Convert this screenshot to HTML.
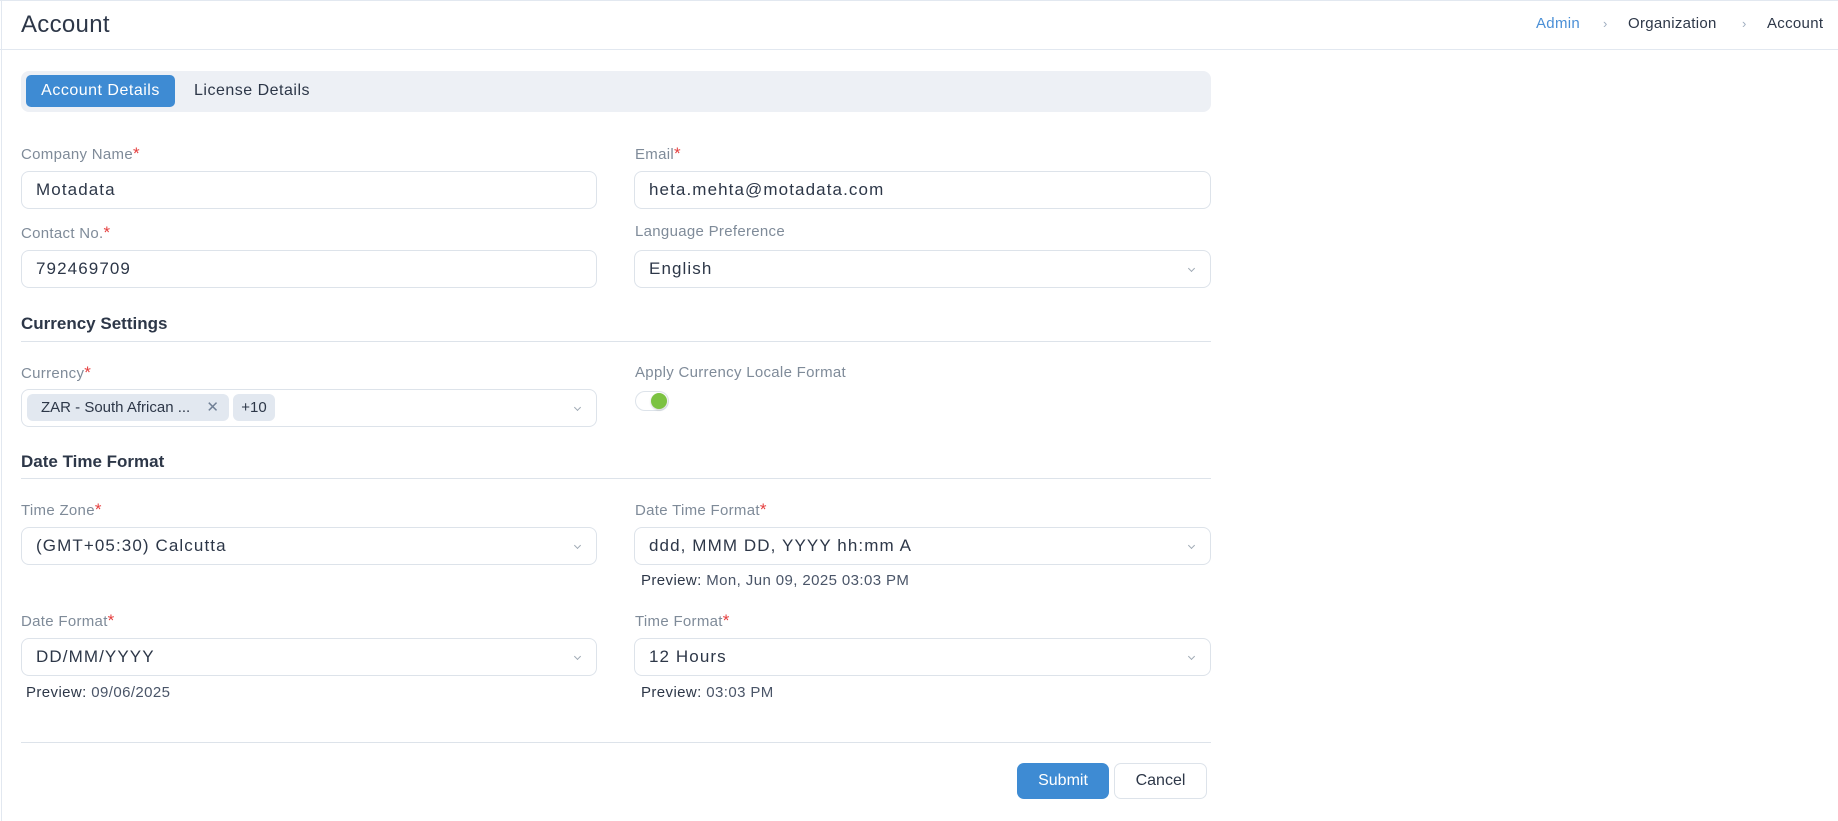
<!DOCTYPE html>
<html><head><meta charset="utf-8"><style>
*{box-sizing:border-box;margin:0;padding:0}
body{width:1838px;height:821px;background:#fff;font-family:"Liberation Sans",sans-serif;color:#2d3748;position:relative;overflow:hidden}
.a{position:absolute;white-space:nowrap}
.lbl{font-size:15px;color:#7f8b99;letter-spacing:0.3px}
.lbl i{color:#e53e3e;font-style:normal;font-size:17px}
.inp{position:absolute;height:38px;border:1px solid #dde3ea;border-radius:8px;font-size:17px;letter-spacing:1.1px;color:#2d3748;padding-left:14px;line-height:36px}
.L{left:21px;width:576px}.R{left:634px;width:577px}
.chev{position:absolute;right:16px;top:15px;width:5px;height:5px;border-right:1px solid #a0aab5;border-bottom:1px solid #a0aab5;transform:rotate(45deg)}
.h{font-size:17px;font-weight:bold;color:#2d3748}
.line{position:absolute;left:21px;width:1190px;height:1px;background:#dde3ea}
.prev{font-size:15px;color:#4a5568;letter-spacing:0.4px}
.prev b{font-weight:normal;color:#2d3748}
</style></head><body>
<div class="a" style="left:0;top:0;width:1838px;height:1px;background:#e2e8f0"></div>
<div class="a" style="left:1px;top:0;width:1px;height:821px;background:#e2e8f0"></div>
<div class="a" style="left:0;top:49px;width:1838px;height:1px;background:#e2e8f0"></div>
<div class="a" style="left:21px;top:11px;font-size:24px;color:#2d3748;letter-spacing:0.3px">Account</div>
<div class="a" style="left:1536px;top:15px;font-size:15px;color:#4a8fd6;letter-spacing:0.3px">Admin</div>
<div class="a" style="left:1603px;top:16px;font-size:13px;color:#a0aec0">›</div>
<div class="a" style="left:1628px;top:15px;font-size:15px;color:#2d3748;letter-spacing:0.3px">Organization</div>
<div class="a" style="left:1742px;top:16px;font-size:13px;color:#a0aec0">›</div>
<div class="a" style="left:1767px;top:15px;font-size:15px;color:#2d3748;letter-spacing:0.3px">Account</div>

<div class="a" style="left:21px;top:71px;width:1190px;height:41px;background:#edf0f5;border-radius:8px"></div>
<div class="a" style="left:26px;top:75px;width:149px;height:32px;background:#3e8bd3;border-radius:5px;color:#fff;font-size:16px;letter-spacing:0.5px;line-height:32px;text-align:center">Account Details</div>
<div class="a" style="left:194px;top:82px;font-size:16px;letter-spacing:0.5px;color:#2d3748">License Details</div>

<div class="a lbl" style="left:21px;top:144px">Company Name<i>*</i></div>
<div class="a lbl" style="left:635px;top:144px">Email<i>*</i></div>
<div class="inp L" style="top:171px">Motadata</div>
<div class="inp R" style="top:171px">heta.mehta@motadata.com</div>

<div class="a lbl" style="left:21px;top:223px">Contact No.<i>*</i></div>
<div class="a lbl" style="left:635px;top:223px">Language Preference</div>
<div class="inp L" style="top:250px">792469709</div>
<div class="inp R" style="top:250px">English<span class="chev"></span></div>

<div class="a h" style="left:21px;top:314px">Currency Settings</div>
<div class="line" style="top:341px"></div>

<div class="a lbl" style="left:21px;top:363px">Currency<i>*</i></div>
<div class="a lbl" style="left:635px;top:364px">Apply Currency Locale Format</div>
<div class="inp L" style="top:389px;padding-left:0"><span class="chev"></span></div>
<div class="a" style="left:27px;top:394px;width:202px;height:27px;background:#e2e8f0;border-radius:6px;font-size:15px;line-height:27px;padding-left:14px;color:#2d3748">ZAR - South African ...<span style="position:absolute;right:10px;color:#718096;font-size:15px">✕</span></div>
<div class="a" style="left:233px;top:394px;width:42px;height:27px;background:#e2e8f0;border-radius:6px;font-size:15px;line-height:27px;text-align:center;color:#2d3748">+10</div>
<div class="a" style="left:635px;top:391px;width:34px;height:20px;border:1px solid #dde3ea;border-radius:10px;background:#fff"></div>
<div class="a" style="left:651px;top:393px;width:16px;height:16px;border-radius:50%;background:#7cc242;box-shadow:0 1px 2px rgba(0,0,0,.2)"></div>

<div class="a h" style="left:21px;top:452px">Date Time Format</div>
<div class="line" style="top:478px"></div>

<div class="a lbl" style="left:21px;top:500px">Time Zone<i>*</i></div>
<div class="a lbl" style="left:635px;top:500px">Date Time Format<i>*</i></div>
<div class="inp L" style="top:527px">(GMT+05:30) Calcutta<span class="chev"></span></div>
<div class="inp R" style="top:527px">ddd, MMM DD, YYYY hh:mm A<span class="chev"></span></div>
<div class="a prev" style="left:641px;top:572px"><b>Preview:</b> Mon, Jun 09, 2025 03:03 PM</div>

<div class="a lbl" style="left:21px;top:611px">Date Format<i>*</i></div>
<div class="a lbl" style="left:635px;top:611px">Time Format<i>*</i></div>
<div class="inp L" style="top:638px">DD/MM/YYYY<span class="chev"></span></div>
<div class="inp R" style="top:638px">12 Hours<span class="chev"></span></div>
<div class="a prev" style="left:26px;top:684px"><b>Preview:</b> 09/06/2025</div>
<div class="a prev" style="left:641px;top:684px"><b>Preview:</b> 03:03 PM</div>

<div class="line" style="top:742px"></div>
<div class="a" style="left:1017px;top:763px;width:92px;height:36px;background:#3e8bd3;border-radius:7px;color:#fff;font-size:16px;line-height:36px;text-align:center">Submit</div>
<div class="a" style="left:1114px;top:763px;width:93px;height:36px;border:1px solid #dde3ea;border-radius:7px;color:#2d3748;font-size:16px;line-height:34px;text-align:center">Cancel</div>
</body></html>
